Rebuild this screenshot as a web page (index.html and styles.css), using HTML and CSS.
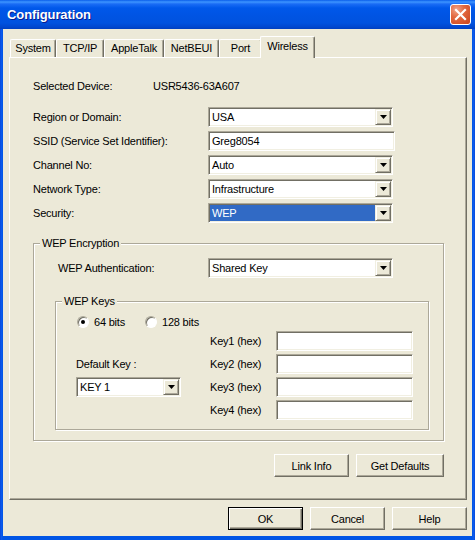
FILE: index.html
```html
<!DOCTYPE html>
<html>
<head>
<meta charset="utf-8">
<link rel="stylesheet" href="styles.css">
</head>
<body>
<div class="window">
  <div class="titlebar">
    <span class="title">Configuration</span>
    <span class="close"><svg width="19" height="19" viewBox="0 0 19 19"><path d="M5 5 L14 14 M14 5 L5 14" stroke="#fff" stroke-width="2.2" stroke-linecap="square"/></svg></span>
  </div>
  <div class="frame">
    <div class="tabs">
      <div class="tab t-system">System</div>
      <div class="tab t-tcp">TCP/IP</div>
      <div class="tab t-apple">AppleTalk</div>
      <div class="tab t-netbeui">NetBEUI</div>
      <div class="tab t-port">Port</div>
      <div class="tab t-wireless active">Wireless</div>
    </div>
    <div class="panel">
      <div class="device"><span class="dev-label">Selected Device:</span><span>USR5436-63A607</span></div>
      <div class="form">
        <span>Region or Domain:</span>
        <div class="select"><span class="val">USA</span><span class="btn"><svg width="7" height="4" viewBox="0 0 7 4"><path d="M0 0H7L3.5 4Z" fill="#000"/></svg></span></div>
        <span>SSID (Service Set Identifier):</span>
        <div class="input wide">Greg8054</div>
        <span>Channel No:</span>
        <div class="select"><span class="val">Auto</span><span class="btn"><svg width="7" height="4" viewBox="0 0 7 4"><path d="M0 0H7L3.5 4Z" fill="#000"/></svg></span></div>
        <span>Network Type:</span>
        <div class="select"><span class="val">Infrastructure</span><span class="btn"><svg width="7" height="4" viewBox="0 0 7 4"><path d="M0 0H7L3.5 4Z" fill="#000"/></svg></span></div>
        <span>Security:</span>
        <div class="select"><span class="val sel">WEP</span><span class="btn"><svg width="7" height="4" viewBox="0 0 7 4"><path d="M0 0H7L3.5 4Z" fill="#000"/></svg></span></div>
      </div>
      <div class="group enc">
        <span class="legend">WEP Encryption</span>
        <div class="auth-row">
          <span class="auth-label">WEP Authentication:</span>
          <div class="select"><span class="val">Shared Key</span><span class="btn"><svg width="7" height="4" viewBox="0 0 7 4"><path d="M0 0H7L3.5 4Z" fill="#000"/></svg></span></div>
        </div>
        <div class="group keys">
          <span class="legend">WEP Keys</span>
          <div class="radios">
            <span class="radio-item first"><span class="radio checked"></span>64 bits</span>
            <span class="radio-item"><span class="radio"></span>128 bits</span>
          </div>
          <div class="keygrid">
            <span class="k-label r1">Key1 (hex)</span><div class="input r1"></div>
            <span class="dk-label">Default Key :</span>
            <span class="k-label r2">Key2 (hex)</span><div class="input r2"></div>
            <div class="select dk-select"><span class="val">KEY 1</span><span class="btn"><svg width="7" height="4" viewBox="0 0 7 4"><path d="M0 0H7L3.5 4Z" fill="#000"/></svg></span></div>
            <span class="k-label r3">Key3 (hex)</span><div class="input r3"></div>
            <span class="k-label r4">Key4 (hex)</span><div class="input r4"></div>
          </div>
        </div>
      </div>
      <div class="actions">
        <button class="button link">Link Info</button>
        <button class="button defaults">Get Defaults</button>
      </div>
    </div>
    <div class="footer">
      <button class="button default">OK</button>
      <button class="button">Cancel</button>
      <button class="button">Help</button>
    </div>
  </div>
</div>
</body>
</html>
```
FILE: styles.css
```css
html, body {
  margin: 0;
  padding: 0;
}
body {
  width: 475px;
  height: 540px;
  overflow: hidden;
  font-family: "Liberation Sans", Arial, sans-serif;
  font-size: 11px;
  letter-spacing: -0.2px;
  color: #000;
}
.window {
  width: 475px;
  height: 540px;
  box-sizing: border-box;
  display: flex;
  flex-direction: column;
  background: linear-gradient(to right, #0842D0 0, #0C5AEF 1px, #0055E5 3px, #0055E5 472px, #0C5AEF 474px, #0842D0 475px);
}
.titlebar {
  height: 29px;
  flex: none;
  display: flex;
  align-items: center;
  justify-content: space-between;
  padding: 0 4px 0 7px;
  background: linear-gradient(to bottom, #0A5EEA 0, #3D95FF 2px, #1A6CF5 4px, #0058EA 8px, #0054E3 16px, #0052DF 23px, #0047CF 27px, #003FBF 29px);
}
.title {
  font-family: "Liberation Sans", Arial, sans-serif;
  font-weight: bold;
  font-size: 13px;
  color: #fff;
  text-shadow: 1px 1px 0 #0A1C8E;
  letter-spacing: -0.1px;
}
.close {
  width: 21px;
  height: 21px;
  box-sizing: border-box;
  border: 1px solid #fff;
  border-radius: 3px;
  display: flex;
  align-items: center;
  justify-content: center;
  background: radial-gradient(circle at 30% 25%, #F0A48A 0, #E2683F 40%, #C9431C 100%);
}
.frame {
  flex: 1;
  margin: 0 3px 4px 3px;
  background: #ECE9D8;
  padding: 7px 5px 0 6px;
  display: flex;
  flex-direction: column;
}
.tabs {
  display: flex;
  align-items: flex-end;
  height: 21px;
  padding-left: 1px;
}
.tab {
  height: 18px;
  box-sizing: border-box;
  padding: 0;
  text-align: center;
  line-height: 17px;
  border: 1px solid #fff;
  border-right-color: #716F64;
  border-bottom: none;
  border-radius: 2px 2px 0 0;
  box-shadow: inset -1px 0 0 #ACA899;
  background: #ECE9D8;
}
.t-system { width: 46px; }
.t-tcp { width: 48px; }
.t-apple { width: 60px; }
.t-netbeui { width: 55px; }
.t-port { width: 43px; }
.t-wireless { width: 55px; }
.tab.active {
  position: relative;
  z-index: 1;
  height: 22px;
  margin: 0 0 -1px -2px;
  line-height: 19px;
}
.panel {
  height: 443px;
  box-sizing: border-box;
  border: 1px solid;
  border-color: #fff #716F64 #716F64 #fff;
  box-shadow: inset -1px -1px 0 #ACA899;
  padding: 18px 22px 0 23px;
  display: flex;
  flex-direction: column;
}
.device {
  display: flex;
  height: 20px;
  align-items: center;
}
.dev-label {
  width: 120px;
}
.form {
  display: grid;
  grid-template-columns: 175px 185px;
  grid-auto-rows: 20px;
  row-gap: 4px;
  margin-top: 11px;
  align-items: center;
}
.select, .input {
  height: 20px;
  box-sizing: border-box;
  border: 1px solid;
  border-color: #ACA899 #fff #fff #ACA899;
  box-shadow: inset 1px 1px 0 #716F64, inset -1px -1px 0 #F1EFE2;
  background: #fff;
}
.select {
  display: flex;
  padding: 1px;
}
.val {
  flex: 1;
  line-height: 16px;
  padding-left: 2px;
}
.val.sel {
  background: #316AC5;
  color: #fff;
}
.btn {
  width: 16px;
  height: 16px;
  box-sizing: border-box;
  border: 1px solid;
  border-color: #F1EFE2 #716F64 #716F64 #F1EFE2;
  box-shadow: inset 1px 1px 0 #fff, inset -1px -1px 0 #ACA899;
  background: #ECE9D8;
  display: flex;
  align-items: center;
  justify-content: center;
}
.input {
  padding: 0 3px;
  line-height: 18px;
}
.input.wide {
  width: 187px;
}
.group {
  position: relative;
  border: 1px solid #ACA899;
  box-shadow: 1px 1px 0 #fff, inset 1px 1px 0 #fff;
}
.legend {
  position: absolute;
  top: -7px;
  left: 6px;
  padding: 0 2px;
  line-height: 13px;
  background: #ECE9D8;
}
.enc {
  margin-top: 20px;
  padding: 14px 14px 10px 21px;
}
.auth-row {
  display: flex;
  align-items: center;
  height: 20px;
  padding-left: 3px;
}
.auth-label {
  width: 150px;
}
.auth-row .select {
  width: 185px;
}
.keys {
  margin-top: 23px;
  padding: 12px 15px 9px 20px;
}
.radios {
  display: flex;
  align-items: center;
  height: 16px;
  padding-left: 1px;
}
.radio-item {
  display: flex;
  align-items: center;
  gap: 5px;
}
.radio-item.first {
  margin-right: 20px;
}
.radio {
  width: 12px;
  height: 12px;
  box-sizing: border-box;
  border-radius: 50%;
  border: 1px solid;
  border-color: #ACA899 #fff #fff #ACA899;
  box-shadow: inset 1px 1px 0 #716F64;
  background: #fff;
  display: flex;
  align-items: center;
  justify-content: center;
}
.radio.checked::after {
  content: "";
  width: 4px;
  height: 4px;
  border-radius: 50%;
  background: #000;
}
.keygrid {
  display: grid;
  grid-template-columns: 105px 29px 66px 137px;
  grid-template-rows: repeat(4, 20px);
  row-gap: 3px;
  margin-top: 1px;
  align-items: center;
}
.k-label { grid-column: 3; }
.keygrid .input { grid-column: 4; }
.r1 { grid-row: 1; }
.r2 { grid-row: 2; }
.r3 { grid-row: 3; }
.r4 { grid-row: 4; }
.dk-label {
  grid-column: 1;
  grid-row: 2;
}
.dk-select {
  grid-column: 1;
  grid-row: 3;
}
.actions {
  display: flex;
  justify-content: flex-end;
  gap: 7px;
  margin-top: 13px;
}
.button {
  height: 23px;
  width: 75px;
  box-sizing: border-box;
  padding: 0;
  font-family: "Liberation Sans", Arial, sans-serif;
  font-size: 11px;
  letter-spacing: -0.2px;
  color: #000;
  background: #ECE9D8;
  border: 1px solid;
  border-color: #fff #716F64 #716F64 #fff;
  box-shadow: inset -1px -1px 0 #ACA899;
  border-radius: 0;
}
.button.defaults {
  width: 88px;
}
.button.default {
  border: 1px solid #000;
  box-shadow: inset 1px 1px 0 #fff, inset -1px -1px 0 #716F64, inset -2px -2px 0 #ACA899;
}
.footer {
  display: flex;
  justify-content: flex-end;
  gap: 7px;
  margin-top: 7px;
}
```
